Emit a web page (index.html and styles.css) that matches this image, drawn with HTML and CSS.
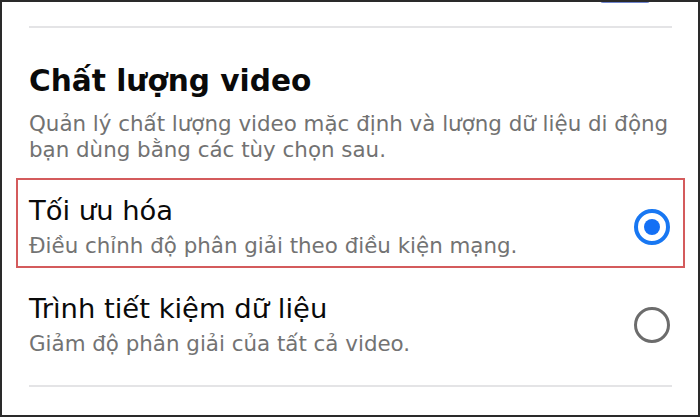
FILE: index.html
```html
<!DOCTYPE html>
<html lang="vi">
<head>
<meta charset="utf-8">
<title>Chất lượng video</title>
<link rel="stylesheet" href="styles.css">
</head>
<body>
<div class="frame">
  <div class="topbar"><span class="stub"></span></div>
  <div class="divider"></div>
  <h1 class="title">Chất lượng video</h1>
  <p class="desc">Quản lý chất lượng video mặc định và lượng dữ liệu di động<br>bạn dùng bằng các tùy chọn sau.</p>

  <div class="option option--highlight">
    <div class="option-text">
      <div class="option-title">Tối ưu hóa</div>
      <div class="option-sub">Điều chỉnh độ phân giải theo điều kiện mạng.</div>
    </div>
    <svg class="radio" width="38" height="38" viewBox="0 0 38 38" aria-hidden="true">
      <circle cx="19" cy="19" r="16" fill="none" stroke="#1877f2" stroke-width="4"/>
      <circle cx="19" cy="19" r="8" fill="#1470f5"/>
    </svg>
  </div>

  <div class="option option--plain">
    <div class="option-text">
      <div class="option-title">Trình tiết kiệm dữ liệu</div>
      <div class="option-sub">Giảm độ phân giải của tất cả video.</div>
    </div>
    <svg class="radio" width="38" height="38" viewBox="0 0 38 38" aria-hidden="true">
      <circle cx="19" cy="19" r="16.5" fill="none" stroke="#6c6c6c" stroke-width="3"/>
    </svg>
  </div>

  <div class="divider divider--bottom"></div>
</div>
</body>
</html>
```

FILE: styles.css
```css
html, body {
  margin: 0;
  padding: 0;
  background: #ffffff;
}

.frame {
  width: 700px;
  height: 417px;
  box-sizing: border-box;
  border: 2px solid #2a2a2a;
  padding: 0 26px 0 27px;
  font-family: "DejaVu Sans", "Liberation Sans", sans-serif;
  color: #0c0c0c;
  overflow: hidden;
  display: flex;
  flex-direction: column;
}

.topbar {
  height: 24px;
  display: flex;
  justify-content: flex-end;
  padding-right: 22px;
}

.stub {
  display: block;
  width: 50px;
  height: 3px;
  margin-top: -2px;
  background: #6f85cf;
  border-radius: 0 0 6px 6px;
}

.divider {
  height: 2px;
  background: #e4e4e6;
  flex-shrink: 0;
}

.divider--bottom {
  margin-top: 28px;
}

.title {
  margin: 35px 0 0;
  font-size: 29.6px;
  line-height: 36px;
  font-weight: 700;
  color: #0a0a0a;
}

.desc {
  margin: 12px 0 0;
  font-size: 21.4px;
  line-height: 26px;
  color: #727272;
}

.option {
  display: flex;
  align-items: center;
}

.option--highlight {
  margin: 15px -13px 0;
  border: 2px solid #d45b5c;
  padding: 15px 11px 7px;
}

.option--plain {
  margin-top: 25px;
}

.option-text {
  flex: 1;
}

.option-title {
  font-size: 27.4px;
  line-height: 32px;
  color: #0a0a0a;
}

.option-sub {
  margin-top: 6px;
  font-size: 21.4px;
  line-height: 26px;
  color: #737373;
}

.radio {
  display: block;
  flex-shrink: 0;
  margin-right: 1px;
}
```
